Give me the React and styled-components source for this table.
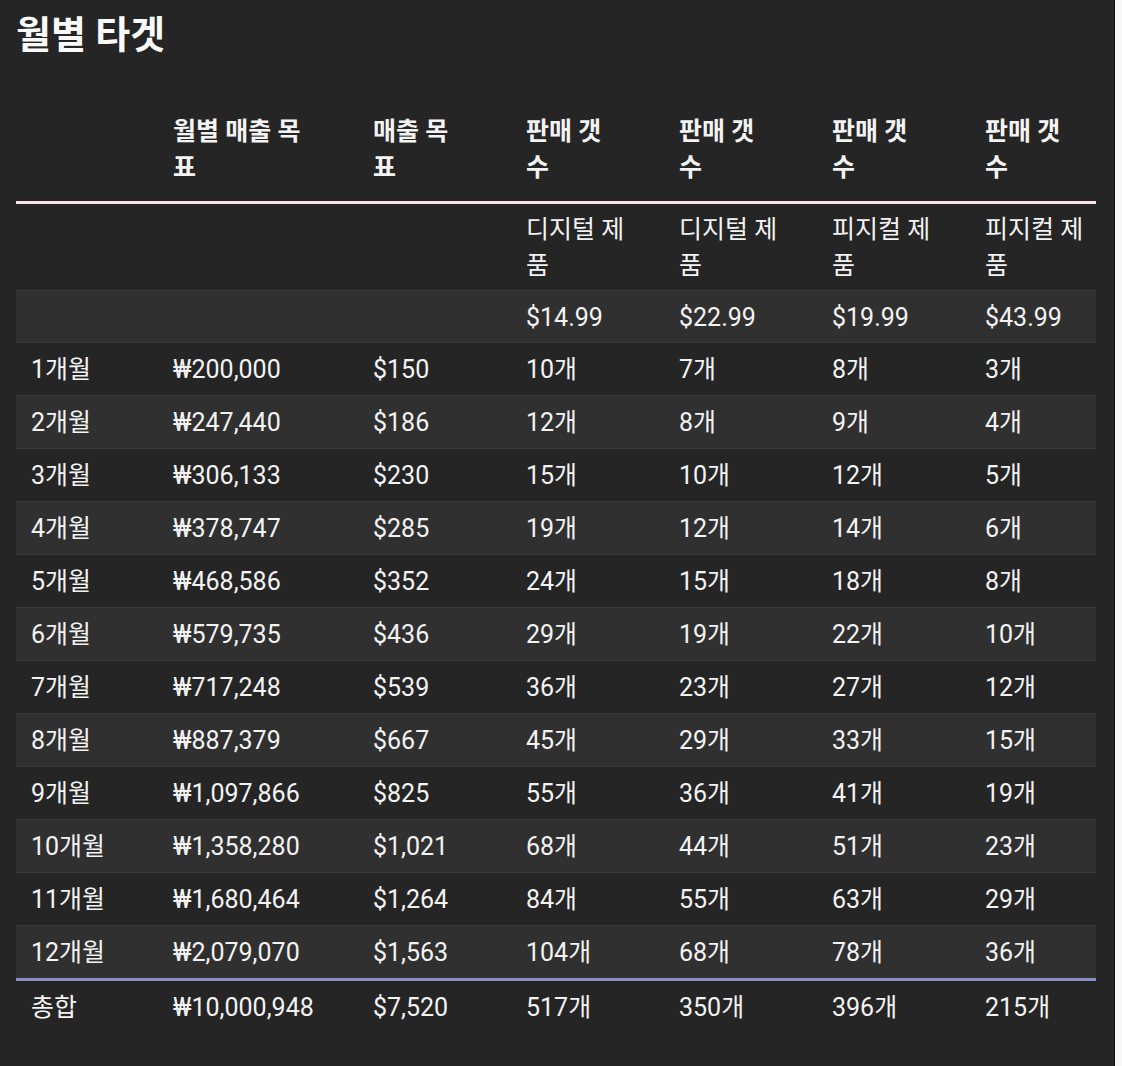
import React from "react";
import styled, { createGlobalStyle } from "styled-components";

/**
 * =Data
 ******************************/

const PRODUCTS = [
	{ name: "디지털 제품", price: "$14.99" },
	{ name: "디지털 제품", price: "$22.99" },
	{ name: "피지컬 제품", price: "$19.99" },
	{ name: "피지컬 제품", price: "$43.99" },
];

const MONTHS = [
	["1개월", "₩200,000", "$150", [10, 7, 8, 3]],
	["2개월", "₩247,440", "$186", [12, 8, 9, 4]],
	["3개월", "₩306,133", "$230", [15, 10, 12, 5]],
	["4개월", "₩378,747", "$285", [19, 12, 14, 6]],
	["5개월", "₩468,586", "$352", [24, 15, 18, 8]],
	["6개월", "₩579,735", "$436", [29, 19, 22, 10]],
	["7개월", "₩717,248", "$539", [36, 23, 27, 12]],
	["8개월", "₩887,379", "$667", [45, 29, 33, 15]],
	["9개월", "₩1,097,866", "$825", [55, 36, 41, 19]],
	["10개월", "₩1,358,280", "$1,021", [68, 44, 51, 23]],
	["11개월", "₩1,680,464", "$1,264", [84, 55, 63, 29]],
	["12개월", "₩2,079,070", "$1,563", [104, 68, 78, 36]],
];

const TOTAL = ["총합", "₩10,000,948", "$7,520", [517, 350, 396, 215]];

const COL_WIDTHS = [142, 200, 153, 153, 153, 153, 126];

/**
 * =Styles
 ******************************/

const GlobalStyle = createGlobalStyle`
	html, body {
		margin: 0;
		padding: 0;
		background: #f8f8f8;
	}

	body {
		font-family: Roboto, "Noto Sans CJK KR", sans-serif;
	}
`;

const Panel = styled.main`
	box-sizing: border-box;
	width: 1115px;
	min-height: 1066px;
	padding: 12px 18px 20px 16px;
	background: #252525;
	border-right: 1px solid #0d0d0d;
	color: #f3f3f3;
`;

const Title = styled.h1`
	margin: 0;
	font-size: 38px;
	line-height: 46px;
	font-weight: 700;
	color: #fafafa;
`;

const Table = styled.table`
	margin-top: 46px;
	width: 1080px;
	table-layout: fixed;
	border-collapse: collapse;
	font-size: 25px;
	line-height: 36px;
`;

const HeadCell = styled.th`
	padding: 10px 10px 15px 15px;
	text-align: left;
	vertical-align: top;
	font-weight: 700;
	border-bottom: 3px solid #fbe4ea;
`;

const Wrap = styled.span`
	display: block;
	max-width: ${(p) => p.$max}px;
`;

const Row = styled.tr`
	border-top: 1px solid #3b3b3b;

	&:nth-child(even) {
		background: #303030;
	}
`;

const Cell = styled.td`
	padding: ${(p) => p.$pad || "9px 10px 7px 15px"};
	text-align: left;
	vertical-align: top;
	font-weight: 400;
	white-space: ${(p) => (p.$wrap ? "normal" : "nowrap")};
`;

const TotalRow = styled.tr`
	border-top: 3px solid #8a90c6;
`;

/**
 * =Component
 ******************************/

export default function App() {
	const tall = "8px 10px 6px 15px";
	const price = "9px 10px 6px 15px";

	return (
		<>
			<GlobalStyle />
			<Panel>
				<Title>월별 타겟</Title>

				<Table>
					<colgroup>
						{COL_WIDTHS.map((w, i) => (
							<col key={i} style={{ width: w }} />
						))}
					</colgroup>

					<thead>
						<tr>
							<HeadCell />
							<HeadCell>
								<Wrap $max={138}>월별 매출 목표</Wrap>
							</HeadCell>
							<HeadCell>
								<Wrap $max={86}>매출 목표</Wrap>
							</HeadCell>
							{PRODUCTS.map((p, i) => (
								<HeadCell key={i}>
									<Wrap $max={86}>판매 갯수</Wrap>
								</HeadCell>
							))}
						</tr>
					</thead>

					<tbody>
						<Row>
							<Cell $pad={tall} />
							<Cell $pad={tall} />
							<Cell $pad={tall} />
							{PRODUCTS.map((p, i) => (
								<Cell $pad={tall} $wrap key={i}>
									<Wrap $max={105}>{p.name}</Wrap>
								</Cell>
							))}
						</Row>

						<Row>
							<Cell $pad={price} />
							<Cell $pad={price} />
							<Cell $pad={price} />
							{PRODUCTS.map((p, i) => (
								<Cell $pad={price} key={i}>
									{p.price}
								</Cell>
							))}
						</Row>

						{MONTHS.map(([month, krw, usd, counts]) => (
							<Row key={month}>
								<Cell>{month}</Cell>
								<Cell>{krw}</Cell>
								<Cell>{usd}</Cell>
								{counts.map((c, i) => (
									<Cell key={i}>{c}개</Cell>
								))}
							</Row>
						))}
					</tbody>

					<tfoot>
						<TotalRow>
							<Cell>{TOTAL[0]}</Cell>
							<Cell>{TOTAL[1]}</Cell>
							<Cell>{TOTAL[2]}</Cell>
							{TOTAL[3].map((c, i) => (
								<Cell key={i}>{c}개</Cell>
							))}
						</TotalRow>
					</tfoot>
				</Table>
			</Panel>
		</>
	);
}
